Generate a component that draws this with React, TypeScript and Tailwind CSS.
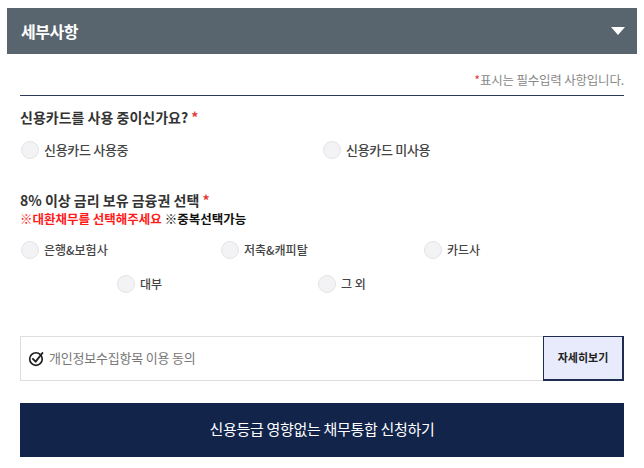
import React from "react";

function Radio({ label, small }: { label: string; small?: boolean }) {
  return (
    <label className="flex items-center gap-[5px] cursor-pointer">
      <span className="w-[18px] h-[18px] rounded-full border border-[#e4e4e6] bg-[#f3f3f5] shrink-0" />
      <span className={small ? "text-[12px] text-[#444] font-medium" : "text-[13px] text-[#444] font-medium tracking-[-0.3px]"}>{label}</span>
    </label>
  );
}

export default function App() {
  return (
    <div className="w-[644px] h-[468px] bg-white overflow-hidden" style={{ fontFamily: '"Noto Sans CJK KR", "Noto Sans", sans-serif' }}>
      <div className="mx-[7px] mt-[8px] h-[46px] bg-[#59656e] flex items-center justify-between pl-[14px] pr-[12px]">
        <span className="text-white text-[16px] font-bold tracking-[-0.5px]">세부사항</span>
        <svg width="14" height="9" viewBox="0 0 14 9"><path d="M0 0 L14 0 L7 8 Z" fill="#fff" /></svg>
      </div>
      <div className="mx-[20px]">
        <div className="text-right text-[12.5px] text-[#888] mt-[16px] leading-[19px] tracking-[-0.2px]">
          <span className="text-[#e53935]">*</span>표시는 필수입력 사항입니다.
        </div>
        <div className="h-[1px] bg-[#2c3b5c] mt-[6px]" />
        <div className="mt-[11px] text-[14px] font-bold text-[#333] leading-[20px]">
          신용카드를 사용 중이신가요? <span className="text-[#e53935]">*</span>
        </div>
        <div className="flex mt-[13px]">
          <div className="w-[302px] pl-[1px]"><Radio label="신용카드 사용중" /></div>
          <div className="pl-[1px]"><Radio label="신용카드 미사용" /></div>
        </div>
        <div className="mt-[30px] text-[14px] font-bold text-[#333] leading-[20px]">
          8% 이상 금리 보유 금융권 선택 <span className="text-[#e53935]">*</span>
        </div>
        <div className="text-[12.5px] font-bold leading-[18px]">
          <span className="text-[#ff1a1a]">※대환채무를 선택해주세요</span> <span className="text-[#111]">※중복선택가능</span>
        </div>
        <div className="grid grid-cols-[200px_203px_200px] mt-[13px] pl-[1px]">
          <Radio label="은행&보험사" small />
          <Radio label="저축&캐피탈" small />
          <Radio label="카드사" small />
        </div>
        <div className="flex mt-[16px] pl-[97px]">
          <div className="w-[201px]"><Radio label="대부" small /></div>
          <Radio label="그 외" small />
        </div>
        <div className="mt-[43px] h-[45px] border border-[#dedede] flex items-center justify-between">
          <div className="flex items-center gap-[4px] pl-[7px]">
            <svg width="17" height="17" viewBox="0 0 16 16" fill="none">
              <circle cx="7.5" cy="8.5" r="5.9" stroke="#222" strokeWidth="1.6" />
              <path d="M4.6 8.3 L7.2 11 L13.6 2.8" stroke="#222" strokeWidth="1.8" fill="none" strokeLinecap="round" strokeLinejoin="round" />
            </svg>
            <span className="text-[13px] text-[#777] tracking-[-0.2px]">개인정보수집항목 이용 동의</span>
          </div>
          <button className="h-[45px] w-[81px] -mr-[1px] -my-[1px] bg-[#e8ebfb] border-2 border-[#1e2c4f] border-t border-l-[1.5px] text-[11px] font-bold text-[#222]">
            자세히보기
          </button>
        </div>
        <button className="mt-[22px] w-full h-[54px] bg-[#12244a] text-white text-[15px] font-normal tracking-[-0.3px]">
          신용등급 영향없는 채무통합 신청하기
        </button>
      </div>
    </div>
  );
}
